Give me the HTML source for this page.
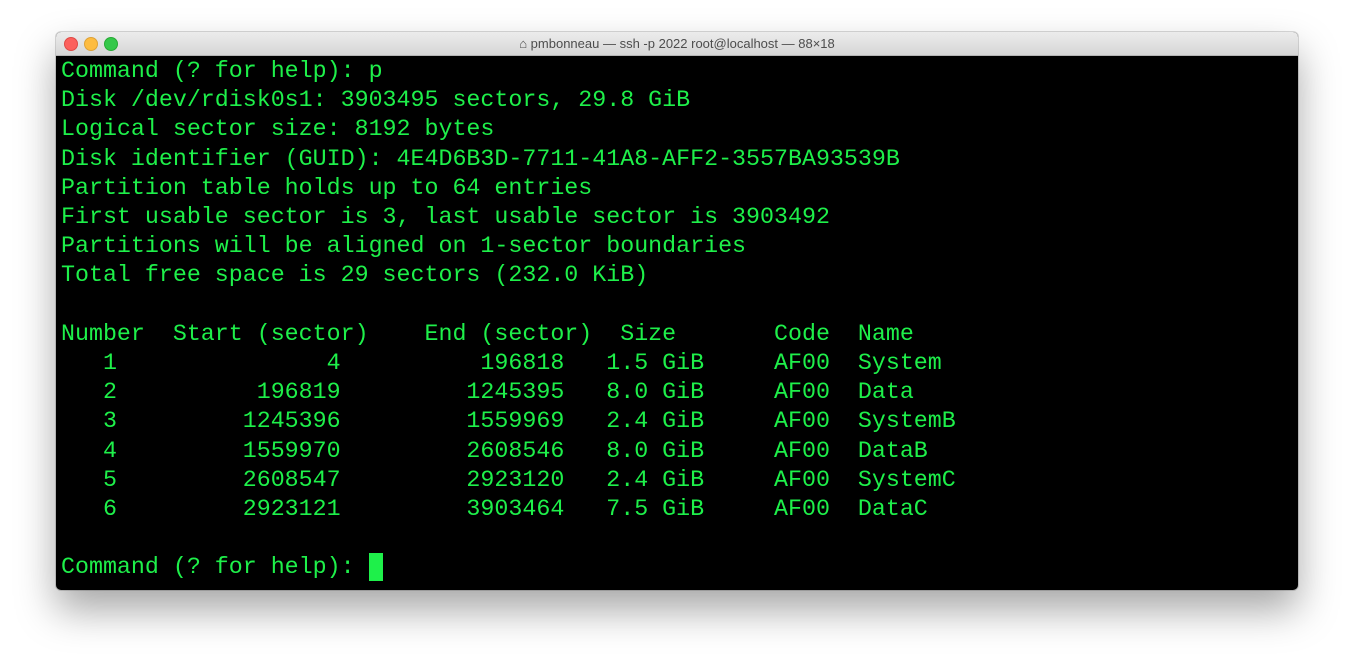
<!DOCTYPE html>
<html><head><style>
body{margin:0;width:1354px;height:671px;background:#fff;overflow:hidden;position:relative}
.win{position:absolute;left:56px;top:32px;width:1242px;height:558px;border-radius:5px;overflow:hidden;box-shadow:0 20px 40px rgba(0,0,0,.35),0 0 0 1px rgba(0,0,0,.15);background:#000}
.tb{height:23px;background:linear-gradient(#ececec,#d6d6d6);border-bottom:1px solid #b5b5b5;position:relative;font:13px "Liberation Sans",sans-serif;color:#4d4d4d;text-align:center;line-height:23px}
.d{position:absolute;top:5px;width:12px;height:12px;border-radius:50%}
pre{margin:0;position:absolute;left:5px;top:25px;font:23.3px/29.2px "Liberation Mono","DejaVu Sans Mono",monospace;color:#1ef04a;letter-spacing:0}
.cur{display:inline-block;width:14px;height:28px;background:#1ef04a;vertical-align:top}
</style></head><body>
<div class="win">
<div class="tb"><span class="d" style="left:8px;background:#fc605c;border:0.5px solid #de4a45"></span><span class="d" style="left:28px;background:#fdbc40;border:0.5px solid #dea236"></span><span class="d" style="left:48px;background:#34c84a;border:0.5px solid #27aa35"></span>&#8962; pmbonneau — ssh -p 2022 root@localhost — 88×18</div>
<pre>Command (? for help): p
Disk /dev/rdisk0s1: 3903495 sectors, 29.8 GiB
Logical sector size: 8192 bytes
Disk identifier (GUID): 4E4D6B3D-7711-41A8-AFF2-3557BA93539B
Partition table holds up to 64 entries
First usable sector is 3, last usable sector is 3903492
Partitions will be aligned on 1-sector boundaries
Total free space is 29 sectors (232.0 KiB)

Number  Start (sector)    End (sector)  Size       Code  Name
   1               4          196818   1.5 GiB     AF00  System
   2          196819         1245395   8.0 GiB     AF00  Data
   3         1245396         1559969   2.4 GiB     AF00  SystemB
   4         1559970         2608546   8.0 GiB     AF00  DataB
   5         2608547         2923120   2.4 GiB     AF00  SystemC
   6         2923121         3903464   7.5 GiB     AF00  DataC

Command (? for help): <span class="cur"></span></pre>
</div>
</body></html>
